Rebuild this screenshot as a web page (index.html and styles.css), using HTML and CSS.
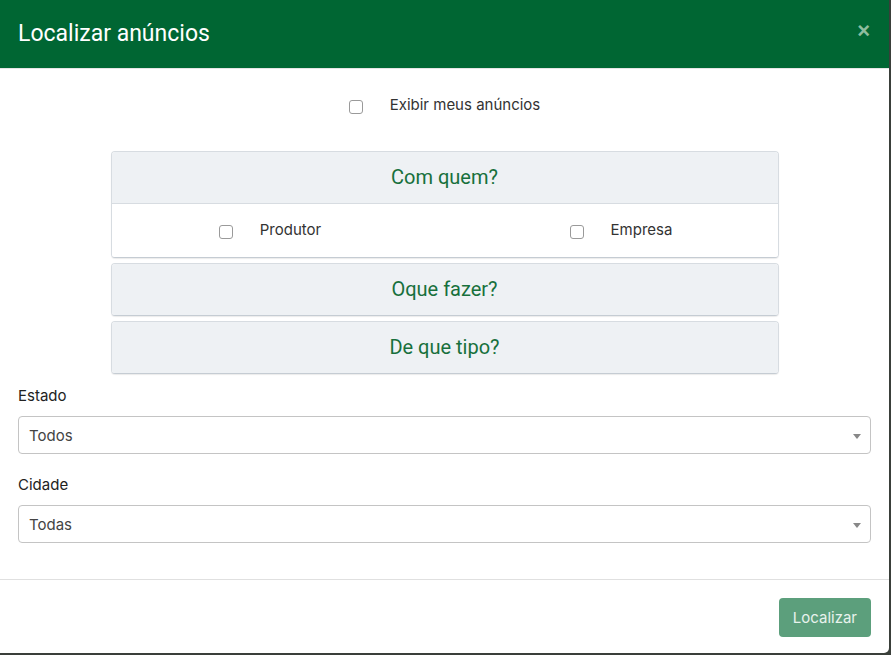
FILE: index.html
```html
<!DOCTYPE html>
<html lang="pt-BR">
<head>
  <meta charset="UTF-8">
  <meta name="viewport" content="width=device-width, initial-scale=1.0">
  <title>Localizar anúncios</title>
  <link rel="stylesheet" href="styles.css">
</head>
<body>
  <div class="modal">
    <header class="modal-header">
      <h1>Localizar anúncios</h1>
      <span class="close">&times;</span>
    </header>

    <div class="modal-body">
      <label class="check mine">
        <input type="checkbox">
        <span>Exibir meus anúncios</span>
      </label>

      <div class="accordion">
        <div class="card">
          <div class="card-header">Com quem?</div>
          <div class="card-body">
            <label class="check"><input type="checkbox"><span>Produtor</span></label>
            <label class="check"><input type="checkbox"><span>Empresa</span></label>
          </div>
        </div>
        <div class="card">
          <div class="card-header">Oque fazer?</div>
        </div>
        <div class="card">
          <div class="card-header">De que tipo?</div>
        </div>
      </div>

      <div class="field">
        <label>Estado</label>
        <div class="select">Todos<span class="caret"></span></div>
      </div>
      <div class="field">
        <label>Cidade</label>
        <div class="select">Todas<span class="caret"></span></div>
      </div>
    </div>

    <footer class="modal-footer">
      <button class="btn">Localizar</button>
    </footer>
  </div>
</body>
</html>
```

FILE: styles.css
```css
body {
  margin: 0;
  background-color: #3a3f3a;
  font-family: Inter, "Noto Sans", sans-serif;
  font-size: 15px;
  color: #333;
}
.modal {
  width: 889px;
  height: 653px;
  background: white;
  border-radius: 0 0 5px 0;
  display: flex;
  flex-direction: column;
  overflow: hidden;
}
.modal-header {
  background-color: #006633;
  color: white;
  height: 69px;
  box-sizing: border-box;
  border-bottom: 1px solid #e5e5e5;
  display: flex;
  justify-content: space-between;
  align-items: center;
  padding: 0 18px;
}
.modal-header h1 {
  margin: 0;
  font-family: Roboto, sans-serif;
  font-size: 23px;
  font-weight: normal;
  padding-bottom: 2px;
}
.close {
  font-family: Arial, sans-serif;
  font-size: 22px;
  font-weight: bold;
  color: #8fbd9f;
  margin-top: -6px;
  margin-right: 1px;
}
.modal-body {
  padding: 26px 18px 36px;
  border-bottom: 1px solid #e0e0e0;
}
.check {
  display: flex;
  align-items: center;
  justify-content: center;
  color: #333;
}
.check input {
  appearance: none;
  width: 14px;
  height: 14px;
  margin: 4px 27px 0 0;
  border: 1px solid #9a9a9a;
  border-radius: 3px;
  background: white;
}
.mine {
  margin-bottom: 37px;
}
.accordion {
  width: 668px;
  margin: 0 auto 12px;
}
.card {
  border: 1px solid #d7dce1;
  border-bottom-color: #c5ccd3;
  border-radius: 4px;
  margin-bottom: 5px;
  box-shadow: 0 1px 1px rgba(0,0,0,0.08);
  overflow: hidden;
}
.card-header {
  background: #eef1f4;
  color: #17703c;
  font-family: Roboto, sans-serif;
  font-size: 20px;
  text-align: center;
  height: 51px;
  line-height: 51px;
}
.card-body {
  background: white;
  border-top: 1px solid #d7dce1;
  display: grid;
  grid-template-columns: 1fr 1fr;
  height: 53px;
}
.card-body .check {
  margin-top: -2px;
}
.card-body .check:first-child {
  margin-left: -16px;
}
.card-body .check:last-child {
  margin-left: 20px;
}
.field + .field {
  margin-top: 21px;
}
.field label {
  display: block;
  line-height: 20px;
  margin-bottom: 10px;
  color: #222;
}
.select {
  height: 38px;
  box-sizing: border-box;
  border: 1px solid #c4c4c4;
  border-radius: 4px;
  padding: 0 10px;
  display: flex;
  align-items: center;
  justify-content: space-between;
  color: #444;
}
.caret {
  width: 0;
  height: 0;
  border-left: 4px solid transparent;
  border-right: 4px solid transparent;
  border-top: 5px solid #888;
  margin-top: 3px;
  margin-right: -1px;
}
.modal-footer {
  flex: 1;
  display: flex;
  justify-content: flex-end;
  align-items: flex-start;
  padding: 18px 18px 0;
}
.btn {
  background-color: #5c9f7c;
  color: #e8f2ec;
  border: none;
  border-radius: 4px;
  font-family: Inter, sans-serif;
  font-size: 15px;
  padding: 0 14px;
  height: 39px;
}
```
